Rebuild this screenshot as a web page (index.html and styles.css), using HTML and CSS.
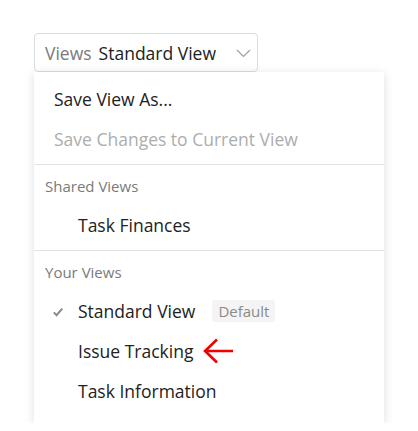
FILE: index.html
```html
<!DOCTYPE html>
<html>
<head>
<meta charset="utf-8">
<link rel="stylesheet" href="styles.css">
</head>
<body>
<div class="wrap">
  <div class="select">
    <span class="select-label">Views</span>
    <span class="select-value">Standard View</span>
    <svg class="chev" width="15" height="9" viewBox="0 0 15 9"><path d="M1 1 L7.5 7.5 L14 1" fill="none" stroke="#a0a0a0" stroke-width="1.2"/></svg>
  </div>
  <div class="menu">
    <div class="group">
      <div class="item plain">Save View As...</div>
      <div class="item plain disabled">Save Changes to Current View</div>
    </div>
    <div class="group">
      <div class="header">Shared Views</div>
      <div class="item"><span class="check"></span><span>Task Finances</span></div>
    </div>
    <div class="group last">
      <div class="header">Your Views</div>
      <div class="item">
        <span class="check"><svg width="10" height="10" viewBox="0 0 10 10"><path d="M0.8 5.4 L3.6 8.2 L9.2 1.6" fill="none" stroke="#8a8a8a" stroke-width="2"/></svg></span>
        <span>Standard View</span>
        <span class="badge">Default</span>
      </div>
      <div class="item">
        <span class="check"></span><span>Issue Tracking</span>
        <svg class="arrow" width="31" height="26" viewBox="0 0 31 26"><path d="M2 13 H30 M14 1.5 L2 13 L14 24.5" fill="none" stroke="#f00000" stroke-width="2.6"/></svg>
      </div>
      <div class="item"><span class="check"></span><span>Task Information</span></div>
    </div>
  </div>
</div>
</body>
</html>
```
FILE: styles.css
```css
html, body {
  margin: 0;
  padding: 0;
  background: #fff;
}
body {
  font-family: "Open Sans", "Liberation Sans", sans-serif;
  color: #222;
}
.wrap {
  padding: 33px 34px 0 34px;
}
.select {
  box-sizing: border-box;
  width: 224px;
  height: 39px;
  border: 1px solid #dcdcdc;
  border-radius: 4px;
  display: flex;
  align-items: center;
  padding: 0 6px 0 10px;
  font-size: 17.5px;
}
.select-label {
  color: #7a7a7a;
  margin-right: 7px;
}
.select-value {
  color: #222;
  flex: 1;
}
.chev {
  display: block;
  margin-top: 1px;
}
.menu {
  width: 350px;
  background: #fff;
  box-shadow: 0 2px 10px rgba(0, 0, 0, 0.13);
  padding-bottom: 12px;
}
.group {
  border-bottom: 1px solid #e2e2e2;
  padding: 0 0 5px 0;
}
.group:first-child {
  padding-top: 7px;
}
.group.last {
  border-bottom: none;
  padding-bottom: 0;
}
.header {
  font-size: 15px;
  color: #7a7a7a;
  line-height: 26px;
  padding: 8px 11px 6px 11px;
}
.item {
  height: 40px;
  display: flex;
  align-items: center;
  font-size: 17.5px;
  padding-left: 19px;
}
.item.plain {
  padding-left: 20px;
}
.item.disabled {
  color: #adadad;
}
.check {
  width: 25px;
  display: flex;
  align-items: center;
}
.check svg {
  display: block;
  margin-top: 1px;
}
.badge {
  margin-left: 17px;
  background: #f4f4f4;
  color: #8a8a8a;
  font-size: 15px;
  line-height: 22px;
  padding: 0 6px;
  border-radius: 3px;
}
.arrow {
  display: block;
  margin-left: 10px;
}
```
